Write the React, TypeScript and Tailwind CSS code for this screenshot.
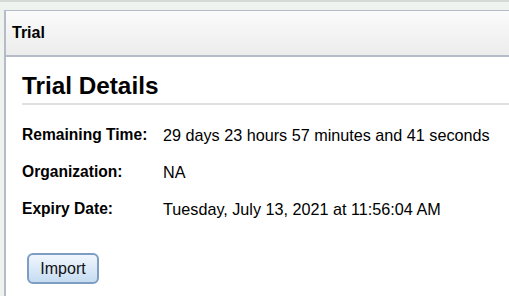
export default function App() {
  const rows = [
    { label: 'Remaining Time:', value: '29 days 23 hours 57 minutes and 41 seconds' },
    { label: 'Organization:', value: 'NA' },
    { label: 'Expiry Date:', value: 'Tuesday, July 13, 2021 at 11:56:04 AM' },
  ]

  return (
    <div className="w-[509px] h-[296px] overflow-hidden bg-[#eef3ef] font-['Liberation_Sans',Arial,sans-serif] text-black">
      {/* top strip */}
      <div className="h-[2px] bg-[#d6dad7]" />
      <div className="pt-2 pl-1">
        <div className="border-t border-l-2 border-[#b5bbc7] bg-white h-[300px]">
          {/* panel header */}
          <div className="h-[46px] flex items-center pl-[6px] bg-gradient-to-b from-[#fbfbfb] to-[#ececec] border-b-2 border-[#b5bbc7]">
            <span className="text-[16px] font-bold">Trial</span>
          </div>

          {/* body */}
          <div className="pl-4 pt-[14px]">
            <h1 className="text-[24.3px] font-bold leading-[30px]">Trial Details</h1>
            <div className="mt-[2px] h-[2px] bg-[#e0e0e0]" />
            <div className="mt-[20px] flex flex-col gap-[17px]">
              {rows.map(r => (
                <div key={r.label} className="flex items-center leading-[20px]">
                  <span className="w-[141px] text-[15.6px] font-bold">{r.label}</span>
                  <span className="text-[16.2px]">{r.value}</span>
                </div>
              ))}
            </div>
            <button className="mt-[34px] ml-[5px] w-[72px] h-[31px] rounded-[6px] border-2 border-[#7d9dc2] bg-gradient-to-b from-[#f0f6fd] to-[#c6dcf2] text-[16px] leading-none text-[#111]">
              Import
            </button>
          </div>
        </div>
      </div>
    </div>
  )
}
